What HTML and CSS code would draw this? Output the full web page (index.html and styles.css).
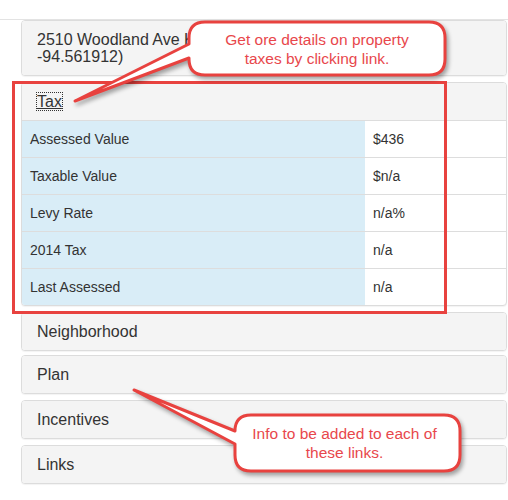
FILE: index.html
```html
<!DOCTYPE html>
<html>
<head>
<meta charset="utf-8">
<link rel="stylesheet" href="styles.css">
</head>
<body>
<div class="page">
  <div class="panel-group">
    <div class="panel">
      <div class="panel-heading">
        <h4 class="panel-title">2510 Woodland Ave Kansas City, MO (39.0779,<br>-94.561912)</h4>
      </div>
    </div>
    <div class="panel">
      <div class="panel-heading">
        <h4 class="panel-title"><a class="focused">Tax</a></h4>
      </div>
      <table class="tax-table">
        <tr><td class="label">Assessed Value</td><td>$436</td></tr>
        <tr><td class="label">Taxable Value</td><td>$n/a</td></tr>
        <tr><td class="label">Levy Rate</td><td>n/a%</td></tr>
        <tr><td class="label">2014 Tax</td><td>n/a</td></tr>
        <tr><td class="label">Last Assessed</td><td>n/a</td></tr>
      </table>
    </div>
    <div class="panel"><div class="panel-heading"><h4 class="panel-title">Neighborhood</h4></div></div>
    <div class="panel tight"><div class="panel-heading"><h4 class="panel-title">Plan</h4></div></div>
    <div class="panel"><div class="panel-heading"><h4 class="panel-title">Incentives</h4></div></div>
    <div class="panel"><div class="panel-heading"><h4 class="panel-title">Links</h4></div></div>
  </div>

  <div class="highlight-box"></div>

  <svg class="callouts" width="508" height="500" viewBox="0 0 508 500">
    <path d="M205 22 H429 Q445 22 445 38 V59 Q445 75 429 75 H205 Q189 75 189 59 V58 L75 101 L189 44 V38 Q189 22 205 22 Z"/>
    <path d="M251 415 H444 Q460 415 460 431 V455 Q460 471 444 471 H251 Q235 471 235 455 V444 L134 390 L235 431 Q235 415 251 415 Z"/>
  </svg>

  <div class="callout-text c1">Get ore details on property<br>taxes by clicking link.</div>
  <div class="callout-text c2">Info to be added to each of<br>these links.</div>
</div>
</body>
</html>
```

FILE: styles.css
```css
html, body {
  margin: 0;
  padding: 0;
  background: #fff;
}

body {
  font-family: "Liberation Sans", Arial, sans-serif;
  color: #333;
}

.page {
  position: relative;
  width: 508px;
  height: 500px;
  padding-top: 19px;
  box-sizing: border-box;
  overflow: hidden;
}

.panel-group {
  border-top: 1px solid #e3e3e3;
  padding: 0 1px 0 21px;
}

.panel {
  background: #fff;
  border: 1px solid #dcdcdc;
  border-radius: 4px;
  box-shadow: 0 1px 1px rgba(0, 0, 0, 0.05);
  overflow: hidden;
}

.panel + .panel {
  margin-top: 6px;
}

.panel + .panel.tight {
  margin-top: 4px;
}

.panel-heading {
  background: #f4f4f4;
  padding: 10px 15px;
}

.panel-title {
  margin: 0;
  font-size: 16px;
  line-height: 17px;
  font-weight: normal;
  color: #333;
  white-space: nowrap;
}

.focused {
  color: #333;
  text-decoration: underline;
  outline: 1px dotted #333;
}

.tax-table {
  width: 100%;
  border-collapse: collapse;
  font-size: 14px;
  line-height: 20px;
}

.tax-table td {
  padding: 8px;
  border-top: 1px solid #dddddd;
  color: #333;
}

.tax-table td.label {
  background: #d9edf7;
  width: 327px;
}

.highlight-box {
  position: absolute;
  left: 12px;
  top: 81px;
  width: 435px;
  height: 233px;
  box-sizing: border-box;
  border: 3px solid #e8423f;
}

.callouts {
  position: absolute;
  left: 0;
  top: 0;
  filter: drop-shadow(2px 3px 2px rgba(0, 0, 0, 0.35));
}

.callouts path {
  fill: #fff;
  stroke: #e8423f;
  stroke-width: 3;
  stroke-linejoin: round;
}

.callout-text {
  position: absolute;
  display: flex;
  flex-direction: column;
  justify-content: center;
  text-align: center;
  font-size: 15.5px;
  line-height: 19px;
  color: #e8474c;
  white-space: nowrap;
}

.c1 {
  left: 189px;
  top: 22px;
  width: 256px;
  height: 53px;
}

.c2 {
  left: 235px;
  top: 415px;
  width: 219px;
  height: 56px;
}
```
